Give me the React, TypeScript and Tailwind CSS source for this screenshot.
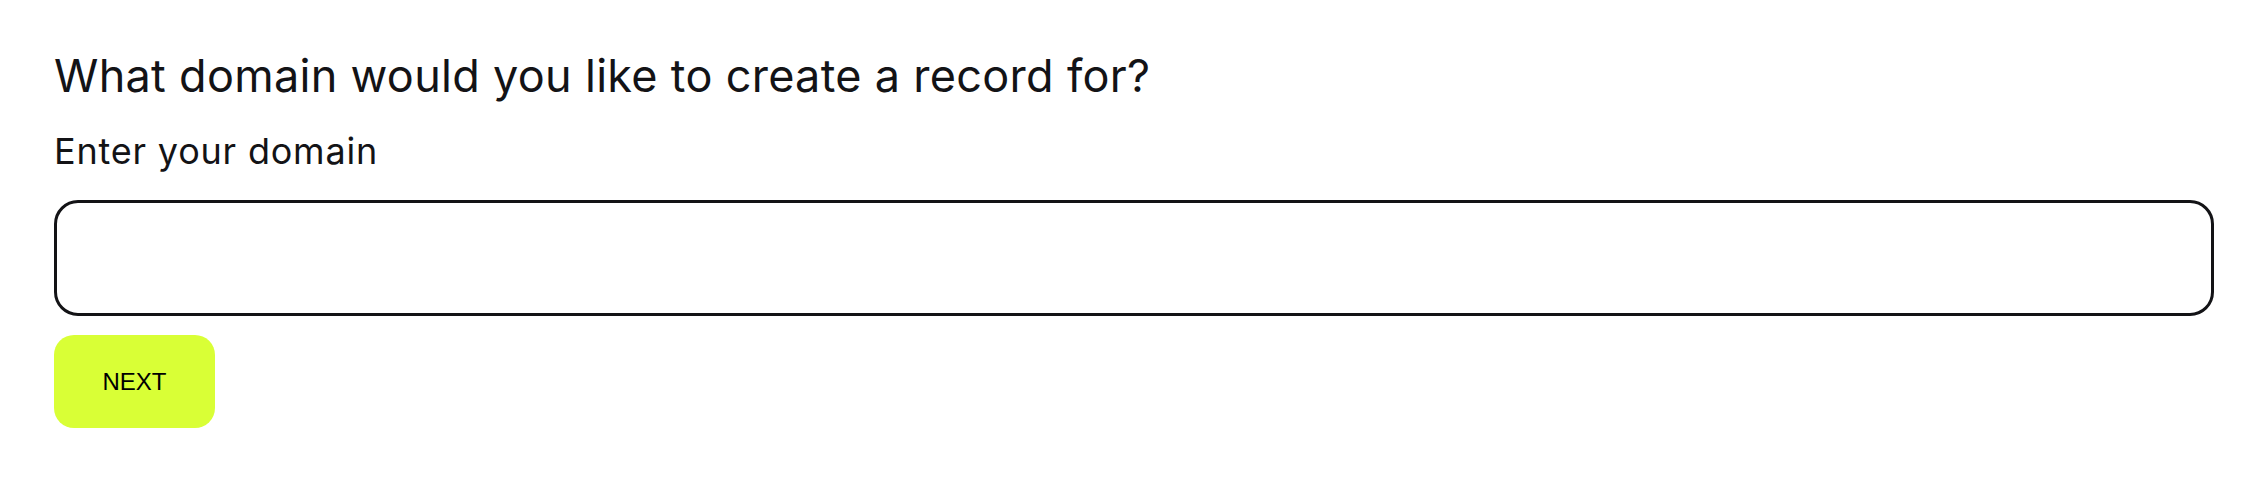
import React from "react";

export default function App() {
  return (
    <div className="flex flex-col items-start w-[2248px] h-[494px] bg-white pl-[54px] pt-[49px] text-[#131316] font-['Inter','Noto_Sans',sans-serif]">
      <h1 className="text-[45px] leading-[54px] font-normal tracking-[0.3px]">
        What domain would you like to create a record for?
      </h1>
      <label className="block mt-[26px] text-[36px] leading-[44px] font-normal tracking-[0.8px]">
        Enter your domain
      </label>
      <input
        type="text"
        className="block mt-[27px] w-[2160px] h-[116px] rounded-[24px] border-[3px] border-[#131316] bg-white outline-none"
      />
      <button className="mt-[19px] w-[161px] h-[93px] rounded-[20px] bg-[#d9ff36] text-[24px] text-black flex items-center justify-center font-['Liberation_Sans',Arial,sans-serif]">
        NEXT
      </button>
    </div>
  );
}
